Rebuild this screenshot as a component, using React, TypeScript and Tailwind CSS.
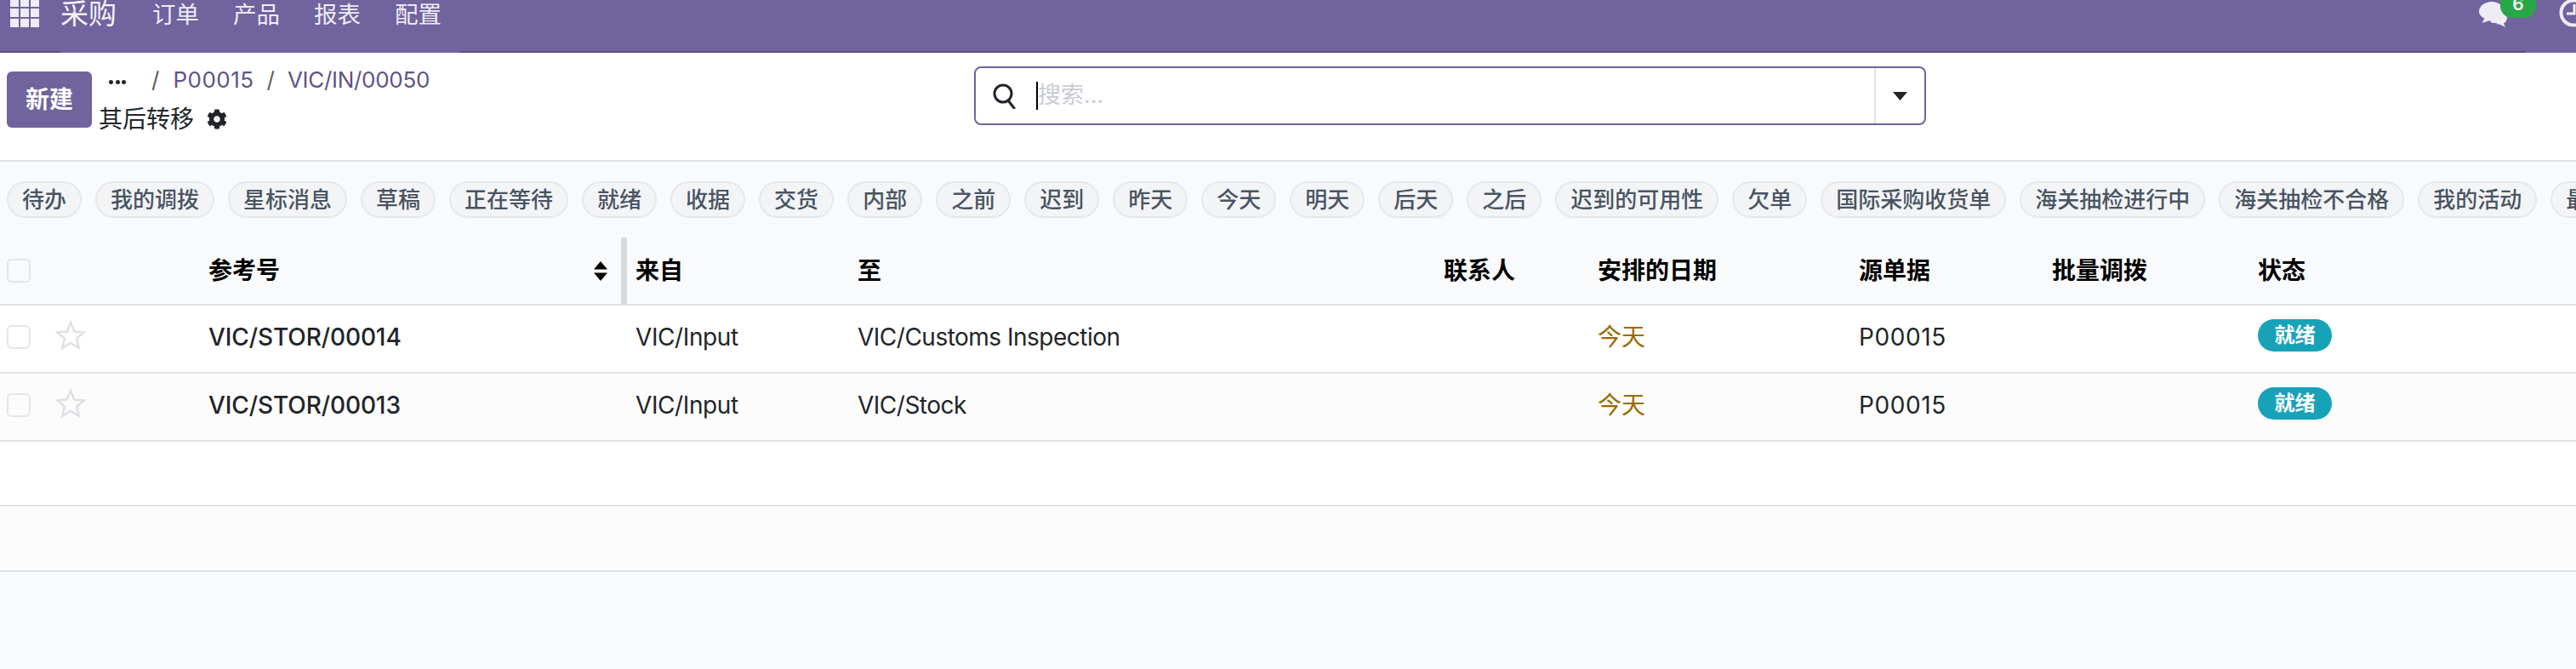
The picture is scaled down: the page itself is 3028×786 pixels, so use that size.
import { FaCog } from 'react-icons/fa'

const menus = ['订单', '产品', '报表', '配置']

const chips = [
  '待办', '我的调拨', '星标消息', '草稿', '正在等待', '就绪', '收据', '交货', '内部', '之前', '迟到', '昨天',
  '今天', '明天', '后天', '之后', '迟到的可用性', '欠单', '国际采购收货单', '海关抽检进行中', '海关抽检不合格',
  '我的活动', '最近活动',
]

const columns = 'grid grid-cols-[245px_502px_261px_689px_181px_307px_227px_242px_1fr]'

const rows = [
  { ref: 'VIC/STOR/00014', to: 'VIC/Customs Inspection', bg: 'bg-white' },
  { ref: 'VIC/STOR/00013', to: 'VIC/Stock', bg: 'bg-[#fcfcfd]' },
]

function Checkbox() {
  return <span className="block w-[28px] h-[28px] rounded-[6px] border-2 border-[#e3e5e9] bg-transparent" />
}

function Star() {
  return (
    <svg width="36" height="36" viewBox="0 0 24 24" fill="none" stroke="#dddfe3" strokeWidth="1.6" strokeLinejoin="miter" className="-mt-[4px]">
      <polygon points="12,2 14.9,9 22.4,9.6 16.7,14.5 18.5,22 12,18 5.5,22 7.3,14.5 1.6,9.6 9.1,9" />
    </svg>
  )
}

function ChatIcon() {
  return (
    <svg width="36" height="31" viewBox="0 0 36 31" className="text-[#eeecf4]">
      <path fill="currentColor" d="M20 10c6 0 13 4 13 10 0 3-1.500 5-4 6.500l2 4.500-7-3.500c-4 .5-8-.5-10.500-2z" />
      <path fill="none" stroke="#71639e" strokeWidth="2.500" d="M11 25c2 1.500 6 3 10.500 2.500" />
      <path fill="currentColor" d="M15 1c8 0 14 5 14 11.500S23 24 15 24c-1 0-2.500-.1-3.500-.4L3.500 26l3-5.200C2.500 18.500 0 16 0 12.500 0 6 7 1 15 1z" />
    </svg>
  )
}

function SearchIcon() {
  return (
    <svg width="30" height="30" viewBox="0 0 30 30" fill="none" stroke="#212529" strokeWidth="3">
      <circle cx="13" cy="12" r="10" />
      <path d="M19 20l7 9" strokeLinecap="round" />
    </svg>
  )
}

function SortIcon() {
  return (
    <svg width="16" height="23" viewBox="0 0 16 23" fill="#000">
      <path d="M8 0l8 9.500H0z" />
      <path d="M8 23l8-9.500H0z" />
    </svg>
  )
}

function Clock() {
  return (
    <svg width="34" height="34" viewBox="0 0 34 34" fill="none" stroke="#eeecf4" strokeWidth="4">
      <circle cx="17" cy="16" r="14.500" />
      <path d="M18 6v11h-9" strokeWidth="3" />
    </svg>
  )
}

export default function App() {
  return (
    <div className="w-[3028px] h-[786px] overflow-hidden bg-[#f9fafb] text-[#212529] font-['Inter','Noto_Sans_CJK_SC',sans-serif]">
      {/* Top bar, scrolled up a bit in the shot */}
      <header className="h-[62px] bg-[#71639e] flex items-start relative overflow-hidden">
        <div className="absolute bottom-0 left-0 w-[71px] h-[2px] bg-[#5c5081]" />
        <div className="absolute bottom-0 left-[540px] right-[60px] h-[2px] bg-[#5c5081]" />
        <div className="grid grid-cols-3 gap-[2px] w-[34px] ml-[12px] -mt-[2px]">
          {Array.from({ length: 9 }).map((_, i) => (
            <span key={i} className="block h-[10px] bg-[#eeecf4]" />
          ))}
        </div>
        <span className="ml-[25px] text-[33px] leading-[32px] text-[#f3f2f7]">采购</span>
        <nav className="flex ml-[42px] gap-[40px] pt-[1px]">
          {menus.map((m) => (
            <span key={m} className="text-[27.500px] leading-[32px] text-[#eeecf4]">{m}</span>
          ))}
        </nav>
        <div className="ml-auto relative w-[114px] h-[62px] shrink-0">
          <div className="absolute left-0 top-[1px]"><ChatIcon /></div>
          <span className="absolute left-[25px] -top-[22px] w-[42px] h-[43px] rounded-[14px] bg-[#28a745] text-white text-[21px] font-semibold leading-[20px] flex items-end justify-center pb-[6px]">6</span>
          <div className="absolute left-[94px] -top-[1px]"><Clock /></div>
        </div>
      </header>

      {/* Control panel */}
      <section className="h-[128px] bg-white border-b-2 border-[#dee2e6] flex items-start">
        <button className="w-[100px] h-[66px] ml-[8px] mt-[22px] rounded-[6px] bg-[#71639e] text-white text-[28px] font-semibold shrink-0">新建</button>
        <div className="w-[1029px] ml-[8px] mt-[19px] shrink-0">
          <div className="flex items-center h-[26px] text-[26px] leading-[26px] text-[#5f5387] pl-[12px]">
            <span className="flex gap-[2.500px] w-[50px] mt-[4px]">
              <i className="block w-[5px] h-[5px] rounded-full bg-[#212529]" />
              <i className="block w-[5px] h-[5px] rounded-full bg-[#212529]" />
              <i className="block w-[5px] h-[5px] rounded-full bg-[#212529]" />
            </span>
            <span className="text-[#5b5e62]">/</span>
            <span className="ml-[16px] tracking-[0.5px]">P00015</span>
            <span className="ml-[15px] text-[#5b5e62]">/</span>
            <span className="ml-[15px] tracking-[-0.3px]">VIC/IN/00050</span>
          </div>
          <div className="flex items-center mt-[19px] h-[28px]">
            <span className="text-[28px] leading-[28px]">其后转移</span>
            <FaCog className="ml-[15px] w-[24px] h-[24px] text-[#212529]" />
          </div>
        </div>
        <div className="w-[1119px] h-[69px] mt-[16px] rounded-[8px] border-2 border-[#71639e] flex items-center bg-white shrink-0">
          <div className="ml-[19px]"><SearchIcon /></div>
          <div className="ml-[22px] h-[33px] w-[2px] bg-black" />
          <span className="text-[27px] text-[#c9ccd0]">搜索...</span>
          <div className="ml-auto w-[2px] h-full bg-[#dee2e6]" />
          <div className="w-[57px] flex justify-center">
            <svg width="17" height="10" viewBox="0 0 17 10" fill="#212529"><path d="M0 0h17l-8.500 10z" /></svg>
          </div>
        </div>
      </section>

      {/* Filter chips */}
      <div className="flex gap-[16px] pl-[8px] pt-[23px] h-[89px] overflow-hidden">
        {chips.map((c) => (
          <span
            key={c}
            className="h-[43px] shrink-0 rounded-full border-2 border-[#e6e8eb] bg-[#f3f4f6] px-[16px] flex items-center text-[26px] leading-none font-medium text-[#4a5463]"
          >
            {c}
          </span>
        ))}
      </div>

      {/* List */}
      <div className={`${columns} h-[80px] border-b-2 border-[#dee2e6] items-center text-[28px] font-semibold text-black`}>
        <div className="pl-[8px]"><Checkbox /></div>
        <div className="relative h-full flex items-center justify-between pr-[33px]">
          <span>参考号</span>
          <SortIcon />
          <div className="absolute right-[10px] top-0 bottom-0 w-[7px] bg-[#d8d9db]" />
        </div>
        <span>来自</span>
        <span>至</span>
        <span>联系人</span>
        <span>安排的日期</span>
        <span>源单据</span>
        <span>批量调拨</span>
        <span>状态</span>
      </div>

      {rows.map((r) => (
        <div key={r.ref} className={`${columns} h-[80px] pb-[4px] border-b-2 border-[#dee2e6] items-center text-[28px] ${r.bg}`}>
          <div className="pl-[8px] flex items-center gap-[29px]">
            <Checkbox />
            <Star />
          </div>
          <span className="font-medium tracking-[-0.1px]">{r.ref}</span>
          <span className="tracking-[-0.4px]">VIC/Input</span>
          <span className="tracking-[-0.5px]">{r.to}</span>
          <span />
          <span className="text-[#9a6b01]">今天</span>
          <span className="tracking-[0.6px]">P00015</span>
          <span />
          <span className="w-[87px] h-[38px] -mt-[4px] rounded-full bg-[#17a2b8] text-white text-[24px] font-semibold flex items-center justify-center">就绪</span>
        </div>
      ))}

      <div className="h-[76px] bg-white border-b-2 border-[#dee2e6]" />
      <div className="h-[77px] bg-[#fcfcfd] border-b-2 border-[#dee2e6]" />
    </div>
  )
}
